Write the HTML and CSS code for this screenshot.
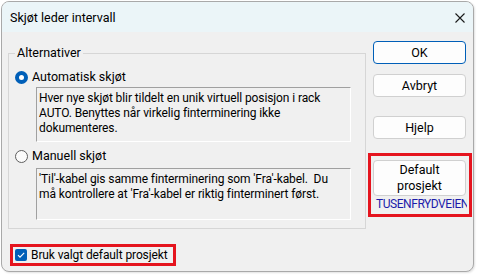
FILE: index.html
```html
<!DOCTYPE html>
<html lang="no">
<head>
<meta charset="utf-8">
<title>Skjøt leder intervall</title>
<link rel="stylesheet" href="styles.css">
</head>
<body>
<div class="window">
  <div class="titlebar">
    <span class="title">Skjøt leder intervall</span>
    <svg class="close" width="10" height="10" viewBox="0 0 10 10"><path d="M0.5 0.5 L9.5 9.5 M9.5 0.5 L0.5 9.5" stroke="#1a1a1a" stroke-width="1.1" fill="none"/></svg>
  </div>
  <div class="main">
    <div class="left">
      <fieldset class="group">
        <legend class="legend">Alternativer</legend>
        <div class="option">
          <span class="radio checked"></span>
          <span class="label">Automatisk skjøt</span>
        </div>
        <div class="desc desc-first">Hver nye skjøt blir tildelt en unik virtuell posisjon i rack<br>AUTO. Benyttes når virkelig finterminering ikke<br>dokumenteres.</div>
        <div class="option option-second">
          <span class="radio"></span>
          <span class="label">Manuell skjøt</span>
        </div>
        <div class="desc desc-second">'Til'-kabel gis samme finterminering som 'Fra'-kabel.&nbsp; Du<br>må kontrollere at 'Fra'-kabel er riktig finterminert først.</div>
      </fieldset>
      <div class="check-row marked">
        <span class="checkbox"><svg width="12" height="12" viewBox="0 0 12 12"><path d="M3 6.2 L5 8.2 L9.2 3.8" stroke="#fff" stroke-width="1.1" fill="none"/></svg></span>
        <span class="label">Bruk valgt default prosjekt</span>
      </div>
    </div>
    <div class="right">
      <button class="btn btn-default">OK</button>
      <button class="btn btn-cancel">Avbryt</button>
      <button class="btn btn-help">Hjelp</button>
      <div class="project marked">
        <button class="btn btn-tall">Default<br>prosjekt</button>
        <div class="project-name">TUSENFRYDVEIEN</div>
      </div>
    </div>
  </div>
</div>
</body>
</html>
```

FILE: styles.css
```css
* { box-sizing: border-box; }
html, body { margin: 0; padding: 0; background: #ffffff; }
body {
  font-family: Roboto, "Noto Sans", sans-serif;
  font-size: 12px;
  letter-spacing: -0.1px;
  color: #000;
  width: 477px;
  height: 276px;
  overflow: hidden;
}
.window {
  margin: 1px 0 0 1px;
  width: 473px;
  height: 271px;
  border: 1px solid #a9a9a9;
  border-radius: 8px;
  background: #f0f0f0;
  box-shadow: 1px 1px 2px rgba(0,0,0,0.12);
}
.titlebar {
  height: 30px;
  background: #ebf5f8;
  border-radius: 7px 7px 0 0;
  display: flex;
  align-items: center;
  justify-content: space-between;
  padding: 1px 8px 0 8px;
}
.title { font-size: 12.5px; letter-spacing: 0; line-height: 16px; }
.close { display: block; }
.main {
  display: flex;
  align-items: flex-start;
}
.left {
  padding-left: 6px;
  width: 364px;
}
.group {
  margin: 13px 0 0 0;
  width: 358px;
  height: 184px;
  border: 1px solid #d6d6d6;
  padding: 8px 0 0 0;
}
.legend {
  padding: 0 2px;
  margin-left: 6px;
  line-height: 16px;
  font-size: 12.5px;
  letter-spacing: 0;
}
.option {
  display: flex;
  align-items: center;
  height: 16px;
  margin-left: 6px;
  gap: 4px;
  font-size: 12.5px;
  letter-spacing: 0;
}
.option-second { margin-top: 6px; }
.label { line-height: 16px; white-space: nowrap; }
.radio {
  width: 13px;
  height: 13px;
  border-radius: 50%;
  border: 1px solid #5e5e5e;
  background: #fbfbfb;
  flex: none;
}
.radio.checked {
  border: 4px solid #005fb8;
  background: #ffffff;
}
.desc {
  margin: 2px 0 0 27px;
  width: 315px;
  border-top: 1px solid #a0a0a0;
  border-left: 1px solid #a0a0a0;
  border-right: 1px solid #ffffff;
  border-bottom: 1px solid #ffffff;
  padding: 3px 0 0 2px;
  line-height: 15px;
  white-space: nowrap;
  overflow: hidden;
}
.desc-first { height: 55px; }
.desc-second { height: 52px; margin-top: 4px; }
.marked { border: 3px solid #e5141e; }
.check-row {
  margin: 15px 0 0 2px;
  width: 166px;
  height: 22px;
  display: flex;
  align-items: center;
  padding-left: 2px;
  gap: 4px;
}
.checkbox {
  width: 12px;
  height: 12px;
  border-radius: 2px;
  background: #005fb8;
  display: block;
  flex: none;
}
.checkbox svg { display: block; }
.right {
  display: flex;
  flex-direction: column;
  margin-left: 7px;
  padding-top: 9px;
}
.btn {
  font-family: inherit;
  font-size: 12.5px;
  letter-spacing: 0;
  color: #000;
  width: 93px;
  height: 23px;
  background: #fdfdfd;
  border: 1px solid #d0d0d0;
  border-radius: 4px;
  padding: 0;
  line-height: 16px;
}
.btn-default { border: 1px solid #005fb8; }
.btn-cancel { margin-top: 10px; }
.btn-help { margin-top: 19px; }
.project {
  margin: 14px 0 0 -5px;
  width: 104px;
  height: 64px;
  padding: 4px 0 0 2px;
}
.btn-tall { height: 36px; line-height: 16px; }
.project-name {
  color: #1c1caa;
  line-height: 14px;
  letter-spacing: -0.45px;
  margin-top: 1px;
  padding-left: 3px;
  white-space: nowrap;
  overflow: hidden;
  width: 94px;
}
```
